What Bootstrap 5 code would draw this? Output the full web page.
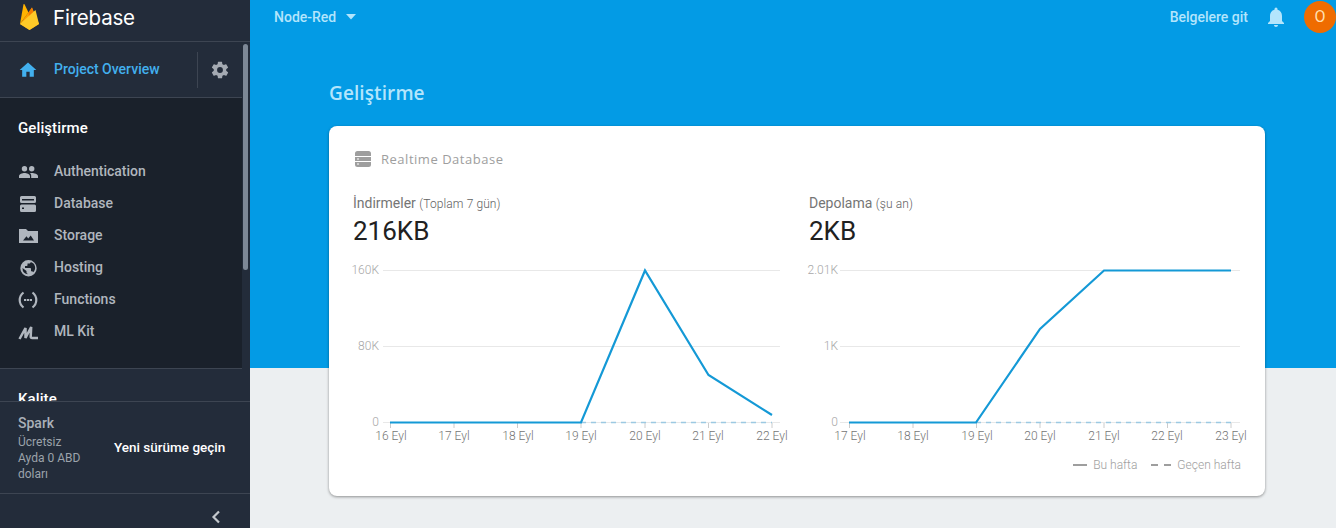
<!DOCTYPE html>
<html lang="tr">
<head>
<meta charset="utf-8">
<title>Firebase</title>
<link href="https://cdn.jsdelivr.net/npm/bootstrap@5.3.0/dist/css/bootstrap.min.css" rel="stylesheet">
<style>
html,body{height:528px;overflow:hidden}
body{font-family:Roboto,sans-serif;background:#eceff1}
.shell{height:528px}
.side{width:250px;height:528px;background:#232c3a;flex:none}
.side-brand{height:42px;border-bottom:1px solid #3d4552;padding:0 0 6px 18px;gap:13px}
.side-brand svg{align-self:flex-start}
.side-brand span{color:#fff;line-height:36px;font-family:Inter,Roboto,sans-serif;font-size:20.5px;font-weight:400;letter-spacing:-.2px}
.side-mid{height:359px;overflow:hidden}
.side-col{width:242px;height:359px;overflow:hidden}
.side-track{width:8px;background:#232c3a;padding:2px 2px 0 1px}
.side-thumb{height:226px;background:#7d8896;border-radius:3px}
.proj{height:56px;border-bottom:1px solid #3d4552;padding-left:18px;background:#232c3a}
.proj a{color:#42b0ee;font-weight:500;font-size:14px;text-decoration:none;margin-left:16px;width:143px}
.proj-sep{width:1px;height:36px;background:#3d4552}
.gear{margin-left:12px}
.dev{height:271px;background:#1a212b;border-bottom:1px solid #3d4552;padding:21px 0 0 18px}
.dev h6,.kal{font-size:15px;font-weight:500;color:#fff;margin:0;line-height:18px;letter-spacing:.1px}
.dev ul{margin:18px 0 0;padding:0;list-style:none}
.dev li{height:32px;display:flex;align-items:center;color:#b0b6be;font-size:14px;font-weight:500}
.dev li svg{width:20px;height:20px;margin-right:16px;flex:none}
.kal{padding:21px 0 0 18px;background:#232c3a}
.plan{height:93px;border-top:1px solid #3d4552;border-bottom:1px solid #3d4552;padding:12px 0 0 18px}
.plan-name{color:#aab0b8;font-size:14px;font-weight:500;line-height:18px}
.plan-txt{color:#9ca3ab;font-size:12px;line-height:16px;margin-top:2px;width:78px}
.plan-btn{color:#fff;font-size:13.5px;font-weight:500;margin:23px 0 0 18px;line-height:20px;white-space:nowrap}
.side-foot{height:34px;padding:11px 28px 0 0}
.main{min-width:0;background:linear-gradient(#039be5 368px,#eceff1 368px)}
.top{height:34px;padding:0 0 0 24px}
.proj-name{color:#b3e5fc;font-size:14px;font-weight:500}
.docs{color:#b3e5fc;font-size:14px;font-weight:500}
.caret-ic{margin-left:9px}
.bell{margin-left:16px}
.avatar{width:32px;height:32px;border-radius:50%;background:#ef6c00;color:#ffe0b2;font-size:16px;margin-left:16px}
.body-wrap{padding:0 71px 0 79px}
.title{color:#b3e5fc;font-size:19px;line-height:24px;margin:47px 0 21px;font-family:"Open Sans",Roboto,sans-serif;font-weight:600;letter-spacing:.1px}
.panel{height:370px;background:#fff;border-radius:8px;box-shadow:0 1px 3px rgba(0,0,0,.4);padding:23px 24px 24px}
.panel-head{color:#9e9e9e;font-size:13px;line-height:20px;gap:10px;letter-spacing:.52px;font-family:"Open Sans",Roboto,sans-serif;height:20px}
.panel-head svg{margin-left:2px}
.charts{display:grid;grid-template-columns:456px 432px;margin-top:24px}
.metric-label{color:#757575;font-size:14px;line-height:20px}
.metric-label small{font-size:12px;font-weight:300;color:#616161;letter-spacing:.1px}
.metric-val{color:#212121;font-size:26px;line-height:34px;font-weight:400}
.chart-svg{display:block;margin-top:16px;overflow:visible}
.chart-svg text{font-family:Roboto,sans-serif;font-size:12px;font-weight:300;fill:#757575}
.chart-svg text.y{fill:#a8a8a8;text-anchor:end}
.chart-svg text.x{text-anchor:middle}
.legend{color:#9e9e9e;font-size:12px;font-weight:300;gap:6px;margin-top:15px;line-height:16px}
.legend svg{display:block}
</style>
</head>
<body>
<div class="shell d-flex">
  <aside class="side d-flex flex-column">
    <div class="side-brand d-flex align-items-center">
      <svg width="22" height="30" viewBox="0 0 22 30"><path d="M2 24 14 7.500 21 24l-9.500 6z" fill="#ffa000"/><path d="M2 24 5.500 4.300Q6 3.500 6.500 4.300L10.500 12.500z" fill="#ffb300"/><path d="M10.500 12.500 14 7.500 16 14l-5 3z" fill="#f57c00"/><path d="M2 24 17.500 10 21 24l-9.500 6z" fill="#ffca28"/></svg>
      <span>Firebase</span>
    </div>
    <div class="side-mid d-flex">
      <div class="side-col">
        <div class="proj d-flex align-items-center">
          <svg width="20" height="20" viewBox="0 0 24 24"><path d="M10 20v-6h4v6h5v-8h3L12 3 2 12h3v8z" fill="#42b0ee"/></svg>
          <a href="#">Project Overview</a>
          <span class="proj-sep"></span>
          <svg class="gear" width="20" height="20" viewBox="0 0 24 24"><path d="M19.400 13c.04-.33.06-.66.06-1s-.02-.67-.06-1l2.100-1.650c.2-.15.25-.42.12-.64l-2-3.460c-.12-.22-.4-.3-.6-.22l-2.500 1c-.5-.4-1.080-.73-1.700-.98l-.37-2.650A.5.5 0 0 0 14 2h-4a.5.5 0 0 0-.5.420L9.130 5.070c-.62.25-1.180.58-1.700.98l-2.500-1c-.22-.08-.48 0-.6.220l-2 3.460c-.13.220-.07.490.12.640L4.570 11c-.04.330-.07.670-.07 1s.03.670.07 1l-2.110 1.650c-.19.150-.25.420-.12.640l2 3.460c.12.220.38.300.6.220l2.500-1c.52.400 1.080.730 1.700.980l.37 2.650c.05.240.26.420.5.420h4c.250 0 .460-.180.500-.420l.370-2.650c.620-.250 1.180-.580 1.700-.980l2.500 1c.220.080.480 0 .600-.220l2-3.460c.120-.220.070-.490-.120-.640zM12 15.500a3.500 3.500 0 1 1 0-7 3.500 3.500 0 0 1 0 7z" fill="#a4aab2"/></svg>
        </div>
        <div class="dev">
          <h6>Geliştirme</h6>
          <ul>
            <li><svg viewBox="0 0 20 20" fill="#b0b6be"><circle cx="6.500" cy="7.800" r="2.700"/><circle cx="13.700" cy="7.800" r="2.700"/><path d="M1 17v-2c0-2 3.500-3.100 5.500-3.100S12 13 12 15v2zM13.300 11.900c2.200-.2 6.700 1 6.700 3.100v2h-6.800v-2c0-1.300-.5-2.300-1.400-2.900z"/></svg>Authentication</li>
            <li><svg viewBox="0 0 20 20"><path d="M3.500 3h13A1.500 1.500 0 0 1 18 4.500v4a1.500 1.500 0 0 1-1.500 1.500h-13A1.500 1.500 0 0 1 2 8.500v-4A1.500 1.500 0 0 1 3.500 3zM4 6v1.500h12V6zM3.500 11.500h13A1.500 1.500 0 0 1 18 13v4.500a1.500 1.500 0 0 1-1.500 1.500h-13A1.500 1.500 0 0 1 2 17.500V13a1.500 1.500 0 0 1 1.500-1.500zM4 14.500V16h2v-1.500z" fill="#b0b6be" fill-rule="evenodd"/></svg>Database</li>
            <li><svg viewBox="0 0 20 20"><path d="M1 4h7l2 2h10v12H1zM5 15.500h11l-3.300-5-2.500 3-1.700-2.200z" fill="#b0b6be" fill-rule="evenodd"/></svg>Storage</li>
            <li><svg viewBox="0 0 20 20"><path d="M10.500 3a8.200 8.200 0 1 0 0 16.400 8.200 8.200 0 0 0 0-16.400zM9.500 17.300a6.200 6.200 0 0 1-5-6.200L8.500 14v1.200c0 .7.500 1.300 1 1.300zM15.200 15.300a1.700 1.700 0 0 0-1.500-1h-.7v-2.500a.8.800 0 0 0-.8-.8H7V9h1.700c.5 0 .8-.4.8-.8V6.500h1.600c.9 0 1.700-.8 1.700-1.600a6.200 6.200 0 0 1 2.400 10.400z" fill="#b0b6be"/></svg>Hosting</li>
            <li><svg viewBox="0 0 20 20" fill="none" stroke="#b0b6be" stroke-width="2.200"><path d="M5.500 3.500C3 5.500 1.700 8 1.700 11s1.300 5.500 3.800 7.500M14.500 3.500c2.500 2 3.800 4.500 3.800 7.500s-1.300 5.500-3.800 7.500"/><path d="M6 11h2.200m.7 0h2.200m.7 0H14" stroke-width="1.800"/></svg>Functions</li>
            <li><svg viewBox="0 0 20 20" fill="none" stroke="#b0b6be" stroke-width="2.500"><path d="M1.500 18 7.500 7V17L13.200 6l-.5 9.500c0 1 .5 1.500 1.500 1.500H20"/></svg>ML Kit</li>
          </ul>
        </div>
        <div class="kal">Kalite</div>
      </div>
      <div class="side-track"><div class="side-thumb"></div></div>
    </div>
    <div class="plan d-flex">
      <div>
        <div class="plan-name">Spark</div>
        <div class="plan-txt">Ücretsiz<br>Ayda 0 ABD doları</div>
      </div>
      <div class="plan-btn">Yeni sürüme geçin</div>
    </div>
    <div class="side-foot d-flex align-items-center justify-content-end">
      <svg width="12" height="14" viewBox="0 0 12 14"><path d="M9 1.500 3.500 7 9 12.500" fill="none" stroke="#c4c8cd" stroke-width="2.200"/></svg>
    </div>
  </aside>
  <main class="main flex-grow-1">
    <div class="top d-flex align-items-center">
      <span class="proj-name">Node-Red</span>
      <svg class="caret-ic" width="12" height="6" viewBox="0 0 12 6"><path d="M1 0h10L6 5.500z" fill="#b3e5fc"/></svg>
      <span class="docs ms-auto">Belgelere git</span>
      <svg class="bell" width="24" height="24" viewBox="0 0 24 24"><path d="M12 22c1.100 0 2-.9 2-2h-4c0 1.100.9 2 2 2zm6-6v-5c0-3.100-1.600-5.600-4.500-6.300V4a1.500 1.500 0 0 0-3 0v.7C7.600 5.400 6 7.900 6 11v5l-2 2v1h16v-1z" fill="#b3e5fc"/></svg>
      <span class="avatar d-flex align-items-center justify-content-center">O</span>
    </div>
    <div class="body-wrap">
      <div class="title">Geliştirme</div>
      <section class="panel">
        <div class="panel-head d-flex align-items-center">
          <svg width="16" height="16" viewBox="0 0 16 16"><path d="M2.500 0h11A2.500 2.500 0 0 1 16 2.500V5H0V2.500A2.500 2.500 0 0 1 2.500 0zM0 6h16v4H0zm0 5h16v2.500a2.500 2.500 0 0 1-2.500 2.500h-11A2.500 2.500 0 0 1 0 13.500z" fill="#9e9e9e"/><path d="M2 7.400h2v1.200H2zM2 12.400h2v1.200H2z" fill="#fff"/></svg>
          <span>Realtime Database</span>
        </div>
        <div class="charts">
          <div>
            <div class="metric-label">İndirmeler <small>(Toplam 7 gün)</small></div>
            <div class="metric-val">216KB</div>
            <svg class="chart-svg" width="456" height="178" viewBox="0 0 456 178">
              <g stroke="#e8e8e8"><path d="M30 6.500H427M30 82.500H427M30 158.500H427"/></g>
              <g stroke="#ccc"><path d="M37.500 159v5M101 159v5M164.500 159v5M228 159v5M292 159v5M355.500 159v5M419 159v5"/></g>
              <text class="y" x="26" y="10">160K</text><text class="y" x="26" y="86">80K</text><text class="y" x="26" y="162">0</text>
              <text class="x" x="38" y="176">16 Eyl</text><text class="x" x="101" y="176">17 Eyl</text><text class="x" x="165" y="176">18 Eyl</text><text class="x" x="228" y="176">19 Eyl</text><text class="x" x="292" y="176">20 Eyl</text><text class="x" x="355" y="176">21 Eyl</text><text class="x" x="419" y="176">22 Eyl</text>
              <path d="M228 158.500H419" fill="none" stroke="#9cc9e2" stroke-width="1.500" stroke-dasharray="5 5"/>
              <polyline points="37,158.500 228,158.500 292,6.500 355.500,111 419,151" fill="none" stroke="#1499d6" stroke-width="2.200"/>
            </svg>
          </div>
          <div>
            <div class="metric-label">Depolama <small>(şu an)</small></div>
            <div class="metric-val">2KB</div>
            <svg class="chart-svg" width="432" height="178" viewBox="0 0 432 178">
              <g stroke="#e8e8e8"><path d="M31 6.500H431M31 82.500H431M31 158.500H431"/></g>
              <g stroke="#ccc"><path d="M40.500 159v5M104 159v5M167.500 159v5M231 159v5M295 159v5M358.500 159v5M422 159v5"/></g>
              <text class="y" x="29" y="10">2.01K</text><text class="y" x="29" y="86">1K</text><text class="y" x="29" y="162">0</text>
              <text class="x" x="41" y="176">17 Eyl</text><text class="x" x="104" y="176">18 Eyl</text><text class="x" x="168" y="176">19 Eyl</text><text class="x" x="231" y="176">20 Eyl</text><text class="x" x="295" y="176">21 Eyl</text><text class="x" x="358" y="176">22 Eyl</text><text class="x" x="422" y="176">23 Eyl</text>
              <path d="M167 158.500H422" fill="none" stroke="#9cc9e2" stroke-width="1.500" stroke-dasharray="5 5"/>
              <polyline points="40,158.500 167,158.500 231,65 295,6.500 422,6.500" fill="none" stroke="#1499d6" stroke-width="2.200"/>
            </svg>
          </div>
        </div>
        <div class="legend d-flex align-items-center justify-content-end">
          <svg width="14" height="2"><path d="M0 1h14" stroke="#9e9e9e" stroke-width="2"/></svg>
          <span class="me-2">Bu hafta</span>
          <svg width="20" height="2"><path d="M0 1h20" stroke="#9e9e9e" stroke-width="2" stroke-dasharray="7 6"/></svg>
          <span>Geçen hafta</span>
        </div>
      </section>
    </div>
  </main>
</div>
<script src="https://cdn.jsdelivr.net/npm/bootstrap@5.3.0/dist/js/bootstrap.bundle.min.js"></script>
</body>
</html>
